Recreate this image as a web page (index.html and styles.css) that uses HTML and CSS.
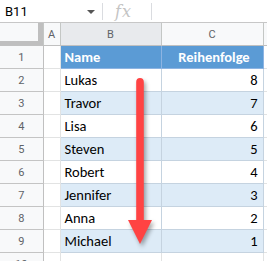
FILE: index.html
```html
<!DOCTYPE html>
<html lang="de">
<head>
    <meta charset="UTF-8">
    <title>Reihenfolge</title>
    <link rel="stylesheet" href="styles.css">
</head>
<body>
    <div class="formula-bar">
        <div class="name-box">B11</div>
        <span class="caret"></span>
        <span class="sep"></span>
        <span class="fx">fx</span>
        <span class="sep"></span>
    </div>

    <div class="sheet">
        <table class="grid">
            <colgroup>
                <col class="c-head">
                <col class="c-a">
                <col class="c-b">
                <col class="c-c">
                <col class="c-d">
            </colgroup>
            <tr class="col-heads">
                <th class="corner"></th>
                <th>A</th>
                <th class="active">B</th>
                <th>C</th>
                <th></th>
            </tr>
            <tr>
                <th>1</th><td></td>
                <td class="t-head">Name</td>
                <td class="t-head center">Reihenfolge</td><td class="rest"></td>
            </tr>
            <tr><th>2</th><td></td><td class="d">Lukas</td><td class="d num">8</td><td class="rest"></td></tr>
            <tr class="band"><th>3</th><td></td><td class="d">Travor</td><td class="d num">7</td><td class="rest"></td></tr>
            <tr><th>4</th><td></td><td class="d">Lisa</td><td class="d num">6</td><td class="rest"></td></tr>
            <tr class="band"><th>5</th><td></td><td class="d">Steven</td><td class="d num">5</td><td class="rest"></td></tr>
            <tr><th>6</th><td></td><td class="d">Robert</td><td class="d num">4</td><td class="rest"></td></tr>
            <tr class="band"><th>7</th><td></td><td class="d">Jennifer</td><td class="d num">3</td><td class="rest"></td></tr>
            <tr><th>8</th><td></td><td class="d">Anna</td><td class="d num">2</td><td class="rest"></td></tr>
            <tr class="band"><th>9</th><td></td><td class="d">Michael</td><td class="d num">1</td><td class="rest"></td></tr>
            <tr><th>10</th><td></td><td></td><td></td><td class="rest"></td></tr>
        </table>

        <svg class="arrow" width="40" height="180" viewBox="0 0 40 180">
            <path d="M16.2 4 Q16.2 0 20 0 Q23.8 0 23.8 4 L23.8 142 L32 142 L20 166 L8 142 L16.2 142 Z" fill="#ff4343"/>
        </svg>
    </div>
</body>
</html>
```

FILE: styles.css
```css
body {
    margin: 0;
    background: #fff;
    font-family: Roboto, "Liberation Sans", sans-serif;
    width: 267px;
    height: 261px;
    overflow: hidden;
}

.formula-bar {
    height: 22px;
    border-bottom: 1px solid #c7c7c7;
    display: flex;
    align-items: center;
    background: #fff;
}

.name-box {
    width: 82px;
    padding-left: 5px;
    font-size: 13px;
    color: #000;
}

.caret {
    width: 0;
    height: 0;
    border-left: 4px solid transparent;
    border-right: 4px solid transparent;
    border-top: 4px solid #555;
    margin-top: 1px;
}

.sep {
    width: 1px;
    height: 17px;
    background: #dadce0;
    margin-left: 7px;
}

.fx {
    font-family: "DejaVu Serif", "Liberation Serif", serif;
    font-style: italic;
    font-size: 16px;
    color: #c4c4c4;
    margin: 0 12px 0 12px;
    letter-spacing: 1px;
}

.sheet {
    position: relative;
    height: 238px;
    overflow: hidden;
}

.grid {
    border-collapse: collapse;
    table-layout: fixed;
    width: 267px;
}

.c-head { width: 43px; }
.c-a { width: 17px; }
.c-b { width: 101px; }
.c-c { width: 102px; }
.c-d { width: 4px; }

.grid th,
.grid td {
    height: 22px;
    padding: 0;
    border: 1px solid #e2e3e3;
    border-top: none;
    border-left: none;
}

.grid th {
    background: #f8f9fa;
    color: #5f6368;
    font-weight: normal;
    font-size: 11px;
    border-right-color: #c0c0c0;
    border-bottom-color: #c4c4c4;
}

.col-heads th {
    height: 22px;
    border-right-color: #c4c7c5;
    border-bottom-color: #c0c0c0;
}

.col-heads th.active {
    background: #e8eaed;
}

.col-heads th.corner {
    background: #f8f9fa;
    box-shadow: inset -5px -4px 0 #bfbfbf;
}

.t-head {
    background: #5b9bd5;
    color: #fff;
    font-family: Carlito, Calibri, Lato, sans-serif;
    font-weight: bold;
    font-size: 14.5px;
    padding-left: 4px !important;
    border-color: #8db4e2 !important;
}

.center {
    text-align: center;
}

.d {
    font-family: Carlito, Calibri, Lato, sans-serif;
    font-size: 14.5px;
    color: #000;
    padding-left: 4px !important;
    border-color: #c5d3e0 !important;
}

.band .d {
    background: #ddebf7;
}

.num {
    text-align: right;
    padding-right: 5px !important;
}

.grid td.rest {
    border-right: none;
}

.arrow {
    position: absolute;
    left: 120px;
    top: 55px;
    filter: drop-shadow(2px 3px 2px rgba(0, 0, 0, 0.35));
}
```
